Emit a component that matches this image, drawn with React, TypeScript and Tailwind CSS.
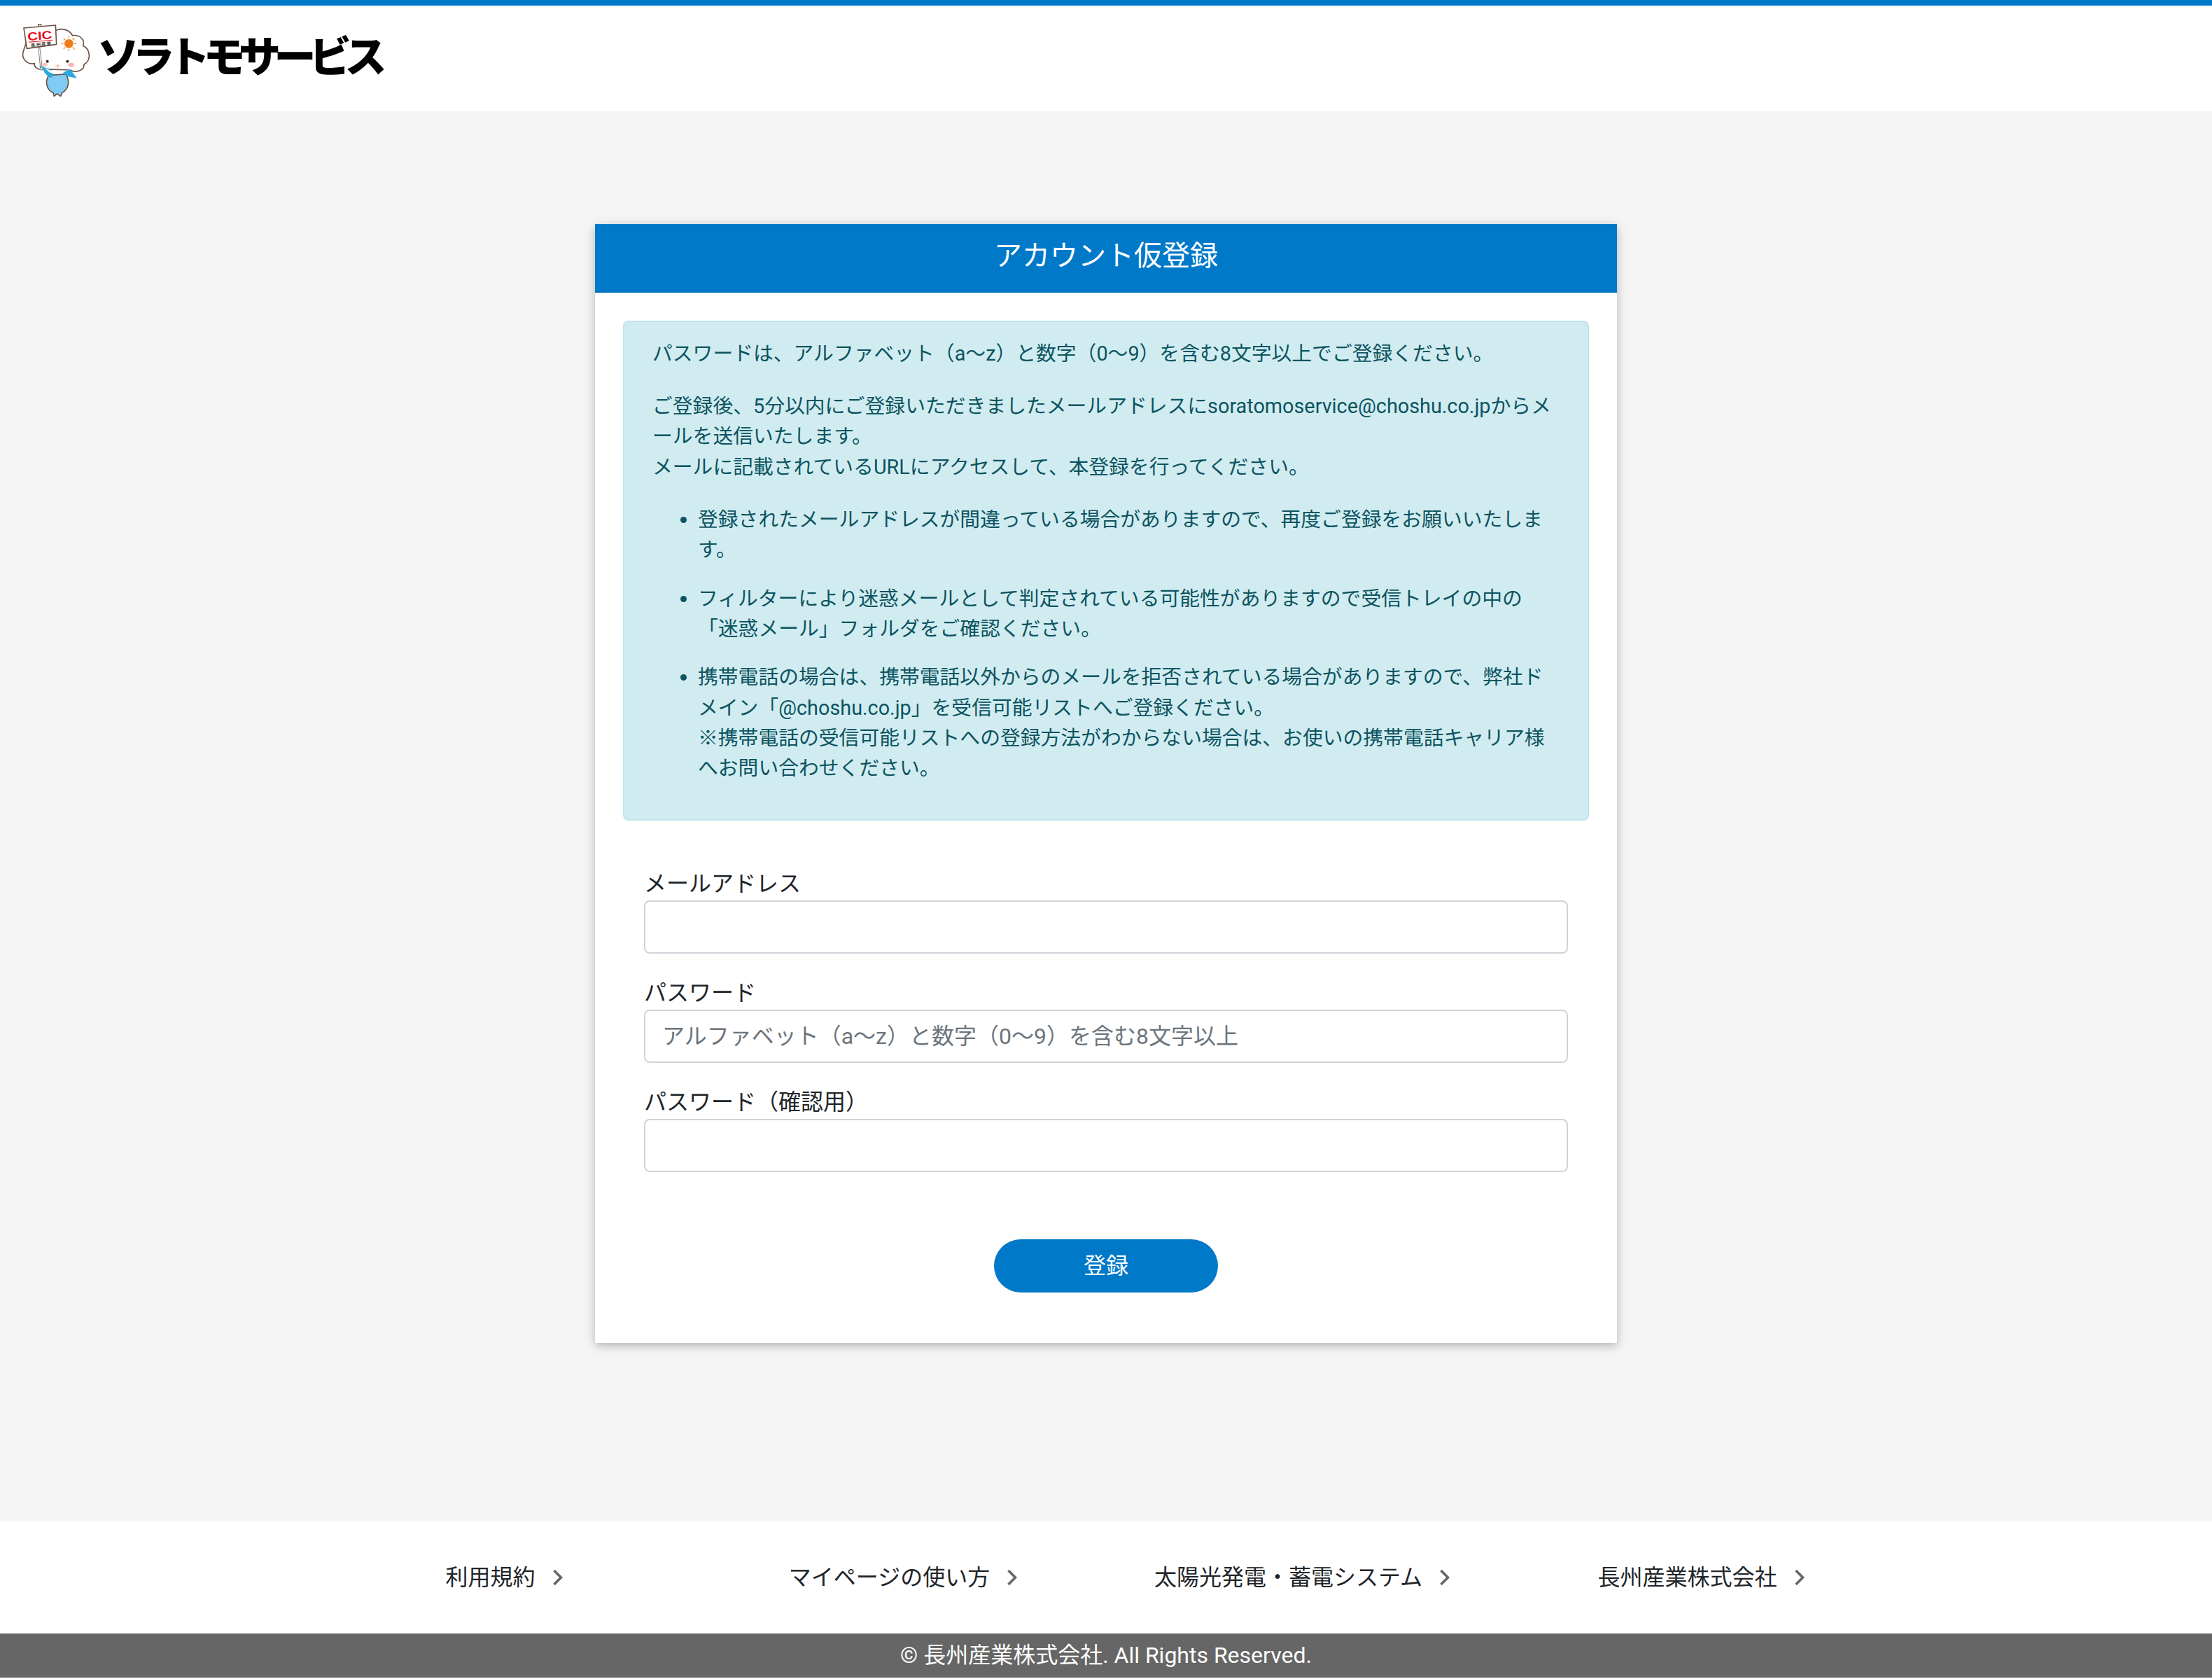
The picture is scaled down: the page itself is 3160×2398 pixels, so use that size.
import React from "react";

const FONT = "font-['Roboto','Noto_Sans_CJK_JP',sans-serif]";

function Mascot() {
  return (
    <svg viewBox="0 0 390 360" width="130" height="120" className="shrink-0 block">
      {/* cloud head */}
      <path
        d="M170 78C190 58 235 60 250 92C285 88 305 112 296 136C325 150 335 195 300 216C302 240 265 256 240 240L120 236C100 240 85 225 88 212C55 218 30 190 40 160L60 100Z"
        fill="#fff"
        stroke="#6b5345"
        strokeWidth="5"
        strokeLinejoin="round"
      />
      {/* sun */}
      <circle cx="235" cy="127" r="19" fill="#ee7a1a" />
      <g stroke="#f39a3c" strokeWidth="5" strokeLinecap="round">
        <line x1="235" y1="97" x2="235" y2="102" />
        <line x1="235" y1="152" x2="235" y2="157" />
        <line x1="205" y1="127" x2="210" y2="127" />
        <line x1="260" y1="127" x2="266" y2="125" />
        <line x1="214" y1="106" x2="218" y2="110" />
        <line x1="253" y1="110" x2="257" y2="104" />
        <line x1="214" y1="148" x2="218" y2="144" />
        <line x1="253" y1="144" x2="258" y2="150" />
      </g>
      {/* pole */}
      <path d="M104 44H116V60H104Z" fill="#fff" stroke="#6b5345" strokeWidth="4" />
      <path d="M110 140L122 240H114L104 140Z" fill="#fff" stroke="#8a7a70" strokeWidth="3" />
      <circle cx="115" cy="226" r="5" fill="#2ea7e0" />
      {/* sign */}
      <path d="M42 60L178 48L182 130L55 148Z" fill="#fff" stroke="#6b5345" strokeWidth="5" strokeLinejoin="round" />
      <g transform="rotate(-5 110 90)">
        <text x="110" y="110" textAnchor="middle" fontFamily="Liberation Sans, sans-serif" fontWeight="700" fontSize="50" fill="#e60f1f" textLength="106" lengthAdjust="spacingAndGlyphs">
          CIC
        </text>
        <rect x="60" y="115" width="104" height="3" fill="#e60f1f" />
        <text x="112" y="138" textAnchor="middle" fontFamily="Noto Sans CJK JP, sans-serif" fontWeight="700" fontSize="20" fill="#55453c" textLength="88">
          長州産業
        </text>
      </g>
      {/* body */}
      <path
        d="M150 262C130 290 140 325 168 338L172 352L184 342L200 352L206 338C236 322 240 285 222 258Z"
        fill="#7ecbf5"
        stroke="#6b5345"
        strokeWidth="5"
        strokeLinejoin="round"
      />
      {/* wings */}
      <path d="M122 226C128 255 145 268 160 272L170 250L150 236Z" fill="#2ea7e0" stroke="#2ea7e0" strokeWidth="2" />
      <path d="M205 250L240 238L268 274L235 268Z" fill="#2ea7e0" stroke="#2ea7e0" strokeWidth="2" />
      {/* chin */}
      <path d="M125 225C150 250 215 255 245 232L210 252C190 258 165 258 150 248Z" fill="#fff" />
      {/* face */}
      <circle cx="143" cy="203" r="6" fill="#3a2418" />
      <circle cx="229" cy="203" r="6" fill="#3a2418" />
      <ellipse cx="133" cy="217" rx="11" ry="8" fill="#f9c3bd" />
      <ellipse cx="245" cy="218" rx="13" ry="9" fill="#f7b5b0" />
      <path d="M178 222H198M188 216V232" stroke="#f5a8a0" strokeWidth="3" strokeLinecap="round" />
    </svg>
  );
}

function Chevron() {
  return (
    <svg viewBox="0 0 15 24" width="15" height="24" className="block shrink-0" fill="none">
      <path d="M2.5 2L12.5 12L2.5 22" stroke="#666666" strokeWidth="3.6" />
    </svg>
  );
}

function FooterLink({ label }: { label: string }) {
  return (
    <a href="#" className="w-[570px] flex items-center justify-center gap-[24px] pr-[10px] text-[32px] leading-[48px] text-[#212529]">
      <span>{label}</span>
      <Chevron />
    </a>
  );
}

function Field({ label, placeholder }: { label: string; placeholder?: string }) {
  return (
    <div className="mb-[32px]">
      <label className="block text-[32px] leading-[48px] text-[#212529]">{label}</label>
      <input
        type="text"
        placeholder={placeholder}
        className="block w-full h-[76px] px-[24px] border-2 border-[#ced4da] rounded-[8px] bg-white text-[32px] text-[#495057] placeholder:text-[#6c757d] outline-none"
      />
    </div>
  );
}

export default function App() {
  return (
    <div className={`${FONT} w-full min-h-[2396px] flex flex-col bg-[#f5f5f5]`}>
      <header className="h-[159px] bg-white border-t-[8px] border-[#0079c9] flex items-start">
        <div className="flex items-start pl-[20px] pt-[12px]">
          <Mascot />
          <span className="ml-[-11px] mt-[19px] text-[60px] leading-[76px] font-black text-black tracking-[-9.5px] whitespace-nowrap font-['Noto_Sans_CJK_JP',sans-serif]">
            ソラトモサービス
          </span>
        </div>
      </header>

      <main className="flex-1 flex justify-center items-start pt-[161px]">
        <section className="w-[1460px] bg-white shadow-[0_4px_10px_rgba(0,0,0,0.16),0_4px_20px_rgba(0,0,0,0.12)]">
          <h1 className="h-[98px] bg-[#0079c9] border-b-2 border-[#006fb8] text-white text-[40px] leading-[92px] text-center font-normal">
            アカウント仮登録
          </h1>
          <div className="px-[40px] pt-[40px]">
            <div className="border-2 border-[#bee5eb] bg-[#d1ecf1] rounded-[8px] px-[40px] pt-[24px] pb-[24px] text-[#0c5460] text-[28.8px] leading-[43.2px]">
              <p className="mb-[32px]">パスワードは、アルファベット（a～z）と数字（0～9）を含む8文字以上でご登録ください。</p>
              <p className="mb-[32px]">
                ご登録後、5分以内にご登録いただきましたメールアドレスにsoratomoservice@choshu.co.jpからメールを送信いたします。
                <br />
                メールに記載されているURLにアクセスして、本登録を行ってください。
              </p>
              <ul className="list-disc pl-[65px]">
                <li className="mb-[26.4px]">登録されたメールアドレスが間違っている場合がありますので、再度ご登録をお願いいたします。</li>
                <li className="mb-[26.4px]">フィルターにより迷惑メールとして判定されている可能性がありますので受信トレイの中の「迷惑メール」フォルダをご確認ください。</li>
                <li className="mb-[26.4px]">
                  携帯電話の場合は、携帯電話以外からのメールを拒否されている場合がありますので、弊社ドメイン「@choshu.co.jp」を受信可能リストへご登録ください。
                  <br />
                  ※携帯電話の受信可能リストへの登録方法がわからない場合は、お使いの携帯電話キャリア様へお問い合わせください。
                </li>
              </ul>
            </div>
            <form className="px-[30px] pt-[66px] pb-[72px]">
              <Field label="メールアドレス" />
              <Field label="パスワード" placeholder="アルファベット（a～z）と数字（0～9）を含む8文字以上" />
              <Field label="パスワード（確認用）" />
              <div className="flex justify-center pt-[64px]">
                <button type="button" className="w-[320px] h-[76px] rounded-full bg-[#0079c9] text-white text-[32px]">
                  登録
                </button>
              </div>
            </form>
          </div>
        </section>
      </main>

      <footer>
        <nav className="h-[160px] bg-white flex justify-center items-center">
          <FooterLink label="利用規約" />
          <FooterLink label="マイページの使い方" />
          <FooterLink label="太陽光発電・蓄電システム" />
          <FooterLink label="長州産業株式会社" />
        </nav>
        <div className="h-[63px] bg-[#666666] text-white text-[32px] leading-[63px] text-center">
          © 長州産業株式会社. All Rights Reserved.
        </div>
      </footer>
    </div>
  );
}
